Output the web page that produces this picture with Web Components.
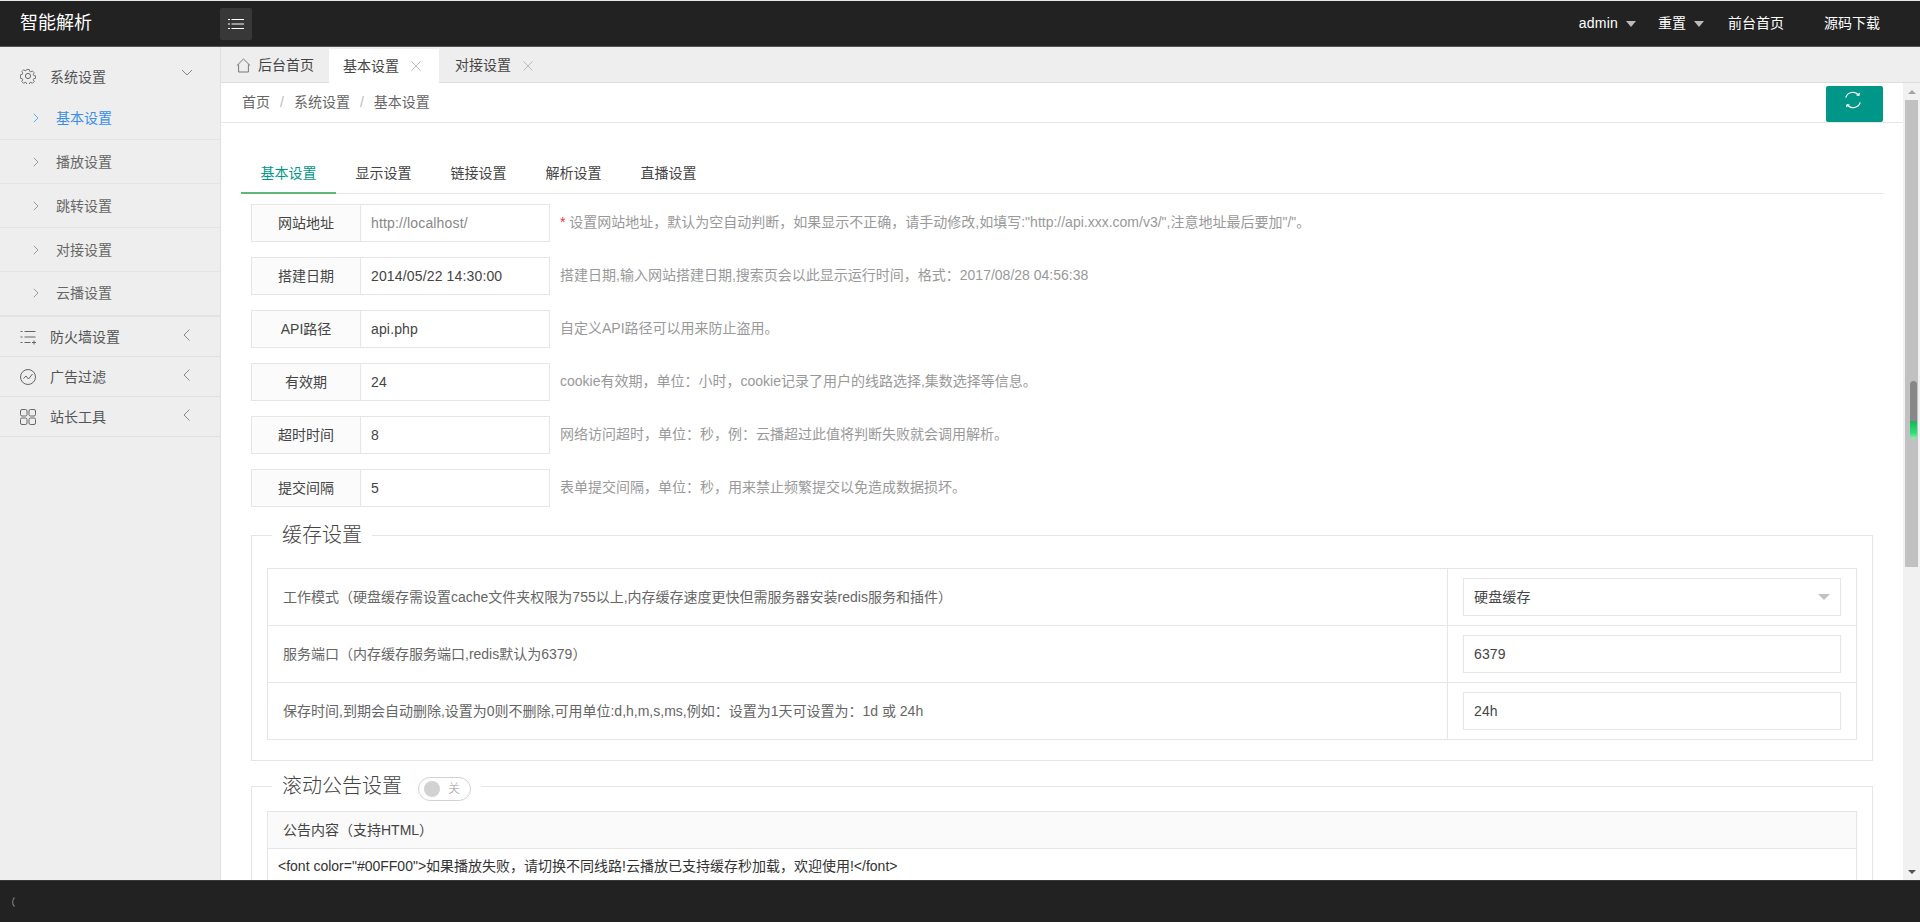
<!DOCTYPE html>
<html lang="zh-CN">
<head>
<meta charset="utf-8">
<title>智能解析</title>
<style>
html,body{margin:0;height:100%;overflow:hidden;background:#fff}
body{font:14px/1.5 "Liberation Sans","Noto Sans CJK SC",sans-serif;color:#333}
</style>
</head>
<body>
<app-shell>
  <app-header slot="header"></app-header>
  <side-nav slot="side">
    <nav-group icon="gear" open>系统设置</nav-group>
    <nav-item active>基本设置</nav-item>
    <nav-item>播放设置</nav-item>
    <nav-item>跳转设置</nav-item>
    <nav-item>对接设置</nav-item>
    <nav-item last>云播设置</nav-item>
    <nav-group icon="list">防火墙设置</nav-group>
    <nav-group icon="chart">广告过滤</nav-group>
    <nav-group icon="grid">站长工具</nav-group>
  </side-nav>
  <page-tabs slot="tabs"></page-tabs>
  <main-panel slot="main">
    <crumb-bar></crumb-bar>
    <content-tabs></content-tabs>
    <form-list>
      <form-row label="网站地址" value="http://localhost/" muted><span style="color:#e33">*</span> 设置网站地址，默认为空自动判断，如果显示不正确，请手动修改,如填写:"http://api.xxx.com/v3/",注意地址最后要加"/"。</form-row>
      <form-row label="搭建日期" value="2014/05/22 14:30:00">搭建日期,输入网站搭建日期,搜索页会以此显示运行时间，格式：2017/08/28 04:56:38</form-row>
      <form-row label="API路径" value="api.php">自定义API路径可以用来防止盗用。</form-row>
      <form-row label="有效期" value="24">cookie有效期，单位：小时，cookie记录了用户的线路选择,集数选择等信息。</form-row>
      <form-row label="超时时间" value="8">网络访问超时，单位：秒，例：云播超过此值将判断失败就会调用解析。</form-row>
      <form-row label="提交间隔" value="5">表单提交间隔，单位：秒，用来禁止频繁提交以免造成数据损坏。</form-row>
    </form-list>
    <field-box legend="缓存设置" gap="18">
      <setting-table>
        <setting-row value="硬盘缓存" select>工作模式（硬盘缓存需设置cache文件夹权限为755以上,内存缓存速度更快但需服务器安装redis服务和插件）</setting-row>
        <setting-row value="6379">服务端口（内存缓存服务端口,redis默认为6379）</setting-row>
        <setting-row value="24h">保存时间,到期会自动删除,设置为0则不删除,可用单位:d,h,m,s,ms,例如：设置为1天可设置为：1d 或 24h</setting-row>
      </setting-table>
    </field-box>
    <field-box legend="滚动公告设置" gap="10" toggle>
      <notice-box head="公告内容（支持HTML）">&lt;font color="#00FF00"&gt;如果播放失败，请切换不同线路!云播放已支持缓存秒加载，欢迎使用!&lt;/font&gt;</notice-box>
    </field-box>
  </main-panel>
  <fake-scrollbar slot="scroll"></fake-scrollbar>
  <app-footer slot="footer"></app-footer>
</app-shell>

<script>
const ICONS = {
  gear:'<g fill="none" stroke="#666" stroke-width="1"><circle cx="8" cy="8" r="2.6"/><path d="M6.6 .8h2.8l.4 2 1.3.6 1.8-1.1 2 2-1.1 1.8.6 1.3 2 .4v2.8l-2 .4-.6 1.3 1.1 1.8-2 2-1.8-1.1-1.3.6-.4 2H6.6l-.4-2-1.3-.6-1.8 1.1-2-2 1.1-1.8-.6-1.3-2-.4V6.6l2-.4.6-1.3L1.1 3.1l2-2 1.8 1.1 1.3-.6z" transform="translate(.8 .8) scale(.9)"/></g>',
  list:'<g stroke="#666" stroke-width="1" fill="none"><path d="M.5 2.5h2M.5 8h2M.5 13.5h2M4.5 2.5h11M4.5 8h11M4.5 13.5h6M12 13.5h4M14 11.5v4"/></g>',
  chart:'<g fill="none" stroke="#666" stroke-width="1"><circle cx="8" cy="8" r="7.5"/><path d="M3.5 9.5l2.5-2.5 2.5 3 4-5"/></g>',
  grid:'<g fill="none" stroke="#666" stroke-width="1"><rect x=".5" y=".5" width="6.5" height="6.5" rx="1.5"/><rect x="9" y=".5" width="6.5" height="6.5" rx="1.5"/><rect x=".5" y="9" width="6.5" height="6.5" rx="1.5"/><rect x="9" y="9" width="6.5" height="6.5" rx="1.5"/></g>',
  home:'<path d="M.8 7.6L7.5 1l6.7 6.6M2.6 6.4v7.6h9.8V6.4" fill="none" stroke="#777" stroke-width="1"/>',
  menu:'<g stroke="#fff" stroke-width="1.2" fill="none"><path d="M0 1.5h2M0 6h2M0 10.5h2M3.5 1.5H16M3.5 6H16M3.5 10.5H16"/></g>',
  close:'<path d="M.5.5l9 9M9.5.5l-9 9" stroke="#bbb" stroke-width="1" fill="none"/>',
  refresh:'<g fill="none" stroke="#fff" stroke-width="1.2"><path d="M1.7 6.6A7.6 7.6 0 0 1 14.6 3.9"/><path d="M16.3 11.4A7.6 7.6 0 0 1 3.4 14.1"/><path d="M15.4 1.8l-.5 2.5-2.4-.4M2.6 16.2l.5-2.5 2.4.4"/></g>'
};
function make(tag, css, html){
  customElements.define(tag, class extends HTMLElement{
    constructor(){super();this.attachShadow({mode:'open'});}
    connectedCallback(){
      const a=n=>this.getAttribute(n)||'';
      this.shadowRoot.innerHTML='<style>'+css+'</style>'+(typeof html==='function'?html(a,this):html);
    }
  });
}
const svg=(n,w,h)=>`<svg width="${w}" height="${h}" viewBox="0 0 ${w} ${h}" style="display:block;flex:none">${ICONS[n]}</svg>`;
const chev=(dir)=>({
  down:'<svg width="12" height="8" viewBox="0 0 12 8" style="display:block"><path d="M1 1l5 5 5-5" fill="none" stroke="#888"/></svg>',
  left:'<svg width="8" height="12" viewBox="0 0 8 12" style="display:block"><path d="M6.5 .5L1 6l5.5 5.5" fill="none" stroke="#888"/></svg>',
  right:'<svg width="6" height="10" viewBox="0 0 6 10" style="display:block"><path d="M.8 .8L5 5 .8 9.2" fill="none" stroke="COLOR"/></svg>'
}[dir]);

make('app-shell',`
 :host{display:grid;height:922px;grid-template-columns:221px 1fr 17px;grid-template-rows:47px 36px 1fr 42px;
   grid-template-areas:"h h h" "s t t" "s m b" "f f f"}
 ::slotted([slot=header]){grid-area:h}
 ::slotted([slot=side]){grid-area:s}
 ::slotted([slot=tabs]){grid-area:t}
 ::slotted([slot=main]){grid-area:m}
 ::slotted([slot=scroll]){grid-area:b}
 ::slotted([slot=footer]){grid-area:f}
`,`<slot name="header"></slot><slot name="side"></slot><slot name="tabs"></slot><slot name="main"></slot><slot name="scroll"></slot><slot name="footer"></slot>`);

make('app-header',`
 :host{display:flex;align-items:center;background:#222;color:#fff;border-top:1px solid #e8e8e8;border-bottom:1px solid #555;box-sizing:border-box;height:47px}
 .logo{width:220px;padding-left:20px;box-sizing:border-box;font-size:18px;color:#fff}
 .btn{width:32px;height:32px;background:#383838;border-radius:2px;display:flex;align-items:center;justify-content:center}
 .sp{flex:1}
 .nav{display:flex;align-items:center;padding-right:40px}
 .i{display:flex;align-items:center;color:#fff}
 .c{width:0;height:0;border:5px solid transparent;border-top:6px solid #bbb;border-bottom:0;margin-left:8px}
`,`<div class="logo">智能解析</div><div class="btn">${svg('menu',16,12)}</div><div class="sp"></div>
 <div class="nav"><div class="i" style="margin-right:22px;letter-spacing:.2px">admin<span class="c"></span></div>
 <div class="i" style="margin-right:24px">重置<span class="c"></span></div>
 <div class="i" style="margin-right:40px">前台首页</div><div class="i">源码下载</div></div>`);

make('side-nav',`:host{display:block;background:#eee;border-right:1px solid #e0e0e0;box-sizing:border-box;padding-top:9px;overflow:hidden}`,`<slot></slot>`);

make('nav-group',`
 :host{display:flex;align-items:center;height:40px;box-sizing:border-box;color:#555;padding-left:20px;position:relative}
 :host(:not([open])){border-bottom:1px solid #e2e2e2}
 .t{margin-left:14px;flex:1;padding-top:2px}
 .a{position:absolute}
`,(a,el)=>`${svg(a('icon'),16,16)}<span class="t"><slot></slot></span>
  <span class="a" style="${el.hasAttribute('open')?'left:181px;top:13px':'left:183px;top:12px'}">${el.hasAttribute('open')?chev('down'):chev('left')}</span>`);

make('nav-item',`
 :host{display:flex;align-items:center;height:44px;box-sizing:border-box;padding-left:33px;color:#666;border-bottom:1px solid #e4e4e4}
 :host([active]){color:#3a8ee6}
 :host([last]){border-bottom:2px solid #e2e2e2;height:45px;padding-bottom:1px}
 span{margin-left:17px;padding-top:1px}
`,(a,el)=>`${chev('right').replace('COLOR',el.hasAttribute('active')?'#6aa7e8':'#999')}<span><slot></slot></span>`);

make('page-tabs',`
 :host{display:flex;background:#eee;border-bottom:1px solid #ddd;box-sizing:border-box;height:36px;color:#444;white-space:nowrap}
 .tab{display:flex;align-items:center;height:33px;margin-top:2px;flex:none;box-sizing:border-box}
 .home{padding:0 0 0 15px;gap:7px;width:108px}
 .on{background:#fff;height:34px;padding:0 18px 0 14px;width:110px;gap:12px}
 .off{padding:0 17px 0 16px;gap:12px}
 span{display:block}
`,`<div class="tab home">${svg('home',15,15)}<span>后台首页</span></div>
 <div class="tab on"><span>基本设置</span>${svg('close',10,10)}</div>
 <div class="tab off"><span>对接设置</span>${svg('close',10,10)}</div>`);

make('main-panel',`:host{display:block;background:#fff;overflow:hidden;min-width:0}`,`<slot></slot>`);

make('crumb-bar',`
 :host{display:flex;align-items:center;height:40px;box-sizing:border-box;border-bottom:1px solid #e6e6e6;padding:0 20px 0 21px;color:#666}
 .s{color:#bbb;margin:0 10px}
 .sp{flex:1}
 .r{width:57px;height:36px;box-sizing:border-box;padding:0 3px 8px 0;background:#009688;border-radius:2px;display:flex;align-items:center;justify-content:center;align-self:flex-start;margin-top:3px}
`,`<span>首页</span><span class="s">/</span><span>系统设置</span><span class="s">/</span><span>基本设置</span><span class="sp"></span><div class="r">${svg('refresh',18,18)}</div>`);

make('content-tabs',`
 :host{display:flex;margin:30px 20px 10px;height:41px;box-sizing:border-box;border-bottom:1px solid #e6e6e6;color:#444}
 div{width:95px;height:40px;line-height:40px;text-align:center;box-sizing:border-box}
 .on{color:#009688;border-bottom:2px solid #5FB878;height:41px;width:95px}
`,`<div class="on">基本设置</div><div>显示设置</div><div>链接设置</div><div>解析设置</div><div>直播设置</div>`);

make('form-list',`:host{display:flex;flex-direction:column;gap:15px;margin:0 30px 13px}`,`<slot></slot>`);

make('form-row',`
 :host{display:flex;height:38px;align-items:stretch}
 .l{width:110px;box-sizing:border-box;background:#fbfbfb;border:1px solid #e6e6e6;text-align:center;line-height:36px;color:#444}
 .v{width:189px;box-sizing:border-box;border:1px solid #e6e6e6;border-left:0;padding-left:10px;line-height:36px;color:#444;letter-spacing:.15px}
 :host([muted]) .v{color:#888}
 .d{margin-left:10px;color:#999;line-height:36px;white-space:nowrap}
`,a=>`<div class="l">${a('label')}</div><div class="v">${a('value')}</div><div class="d"><slot></slot></div>`);

make('field-box',`
 :host{display:block;margin:0 30px 10px}
 fieldset{margin:0;border:1px solid #e6e6e6;padding:0 15px 20px;min-width:0}
 legend{margin-left:5px;padding:0 10px;font-size:20px;line-height:30px;color:#444;display:flex;font-weight:300}
 .sw{align-self:flex-end;width:53px;height:24px;box-sizing:border-box;margin-left:16px;border:1px solid #d2d2d2;border-radius:20px;display:flex;align-items:center;padding-left:5px;gap:8px;font-size:12px;line-height:16px;color:#999;background:#fff}
 .k{width:16px;height:16px;border-radius:50%;background:#d2d2d2}
 .w{padding-top:var(--g)}
`,(a,el)=>`<fieldset><legend><span>${a('legend')}</span>${el.hasAttribute('toggle')?'<span class="sw"><span class="k"></span><span>关</span></span>':''}</legend><div class="w" style="--g:${a('gap')}px"><slot></slot></div></fieldset>`);

make('setting-table',`:host{display:block;border:1px solid #e6e6e6;border-bottom:0}`,`<slot></slot>`);

make('setting-row',`
 :host{display:grid;grid-template-columns:1fr 409px;border-bottom:1px solid #e6e6e6;height:57px;box-sizing:border-box}
 .t{padding-left:15px;line-height:56px;color:#666;white-space:nowrap;overflow:hidden}
 .c{border-left:1px solid #e6e6e6;padding:9px 15px;box-sizing:border-box}
 .i{height:38px;box-sizing:border-box;border:1px solid #e6e6e6;padding-left:10px;line-height:36px;color:#444;display:flex;justify-content:space-between;align-items:center;padding-right:10px;letter-spacing:.15px}
 .a{width:0;height:0;border:6px solid transparent;border-top:6px solid #c2c2c2;border-bottom:0}
`,(a,el)=>`<div class="t"><slot></slot></div><div class="c"><div class="i"><span>${a('value')}</span>${el.hasAttribute('select')?'<span class="a"></span>':''}</div></div>`);

make('notice-box',`
 :host{display:block;border:1px solid #e6e6e6;border-bottom:0}
 .h{height:36px;line-height:36px;background:#fafafa;border-bottom:1px solid #e6e6e6;padding-left:15px;color:#444}
 .b{padding:6px 10px;line-height:22px;color:#333;white-space:nowrap}
`,a=>`<div class="h">${a('head')}</div><div class="b"><slot></slot></div>`);

make('fake-scrollbar',`
 :host{display:flex;flex-direction:column;background:#f1f1f1;position:relative;overflow:hidden}
 .u{height:17px;display:flex;align-items:center;justify-content:center}
 .up{border:4px solid transparent;border-bottom:4px solid #a3a3a3;border-top:0;width:0;height:0}
 .dn{border:4px solid transparent;border-top:4px solid #505050;border-bottom:0;width:0;height:0}
 .t{height:467px;margin:0 2px;background:#c1c1c1}
 .f{flex:1}
 .o{position:absolute;left:7px;top:298px;width:7px;height:58px;border-radius:4px;background:linear-gradient(#888 0,#888 68%,#14b85a 70%,#2fe077 90%,#8ff0b4 100%)}
`,`<div class="u"><span class="up"></span></div><div class="t"></div><div class="f"></div><div class="u"><span class="dn"></span></div><div class="o"></div>`);

make('app-footer',`
 :host{display:flex;align-items:center;background:#222;border-top:1px solid #3a3a3a;box-sizing:border-box;padding-left:11px}
`,`<svg width="4" height="10" viewBox="0 0 4 10" style="display:block"><path d="M3.5 .5C1 3 1 7 3.5 9.5" fill="none" stroke="#777" stroke-width="1.2"/></svg>`);
</script>
</body>
</html>
